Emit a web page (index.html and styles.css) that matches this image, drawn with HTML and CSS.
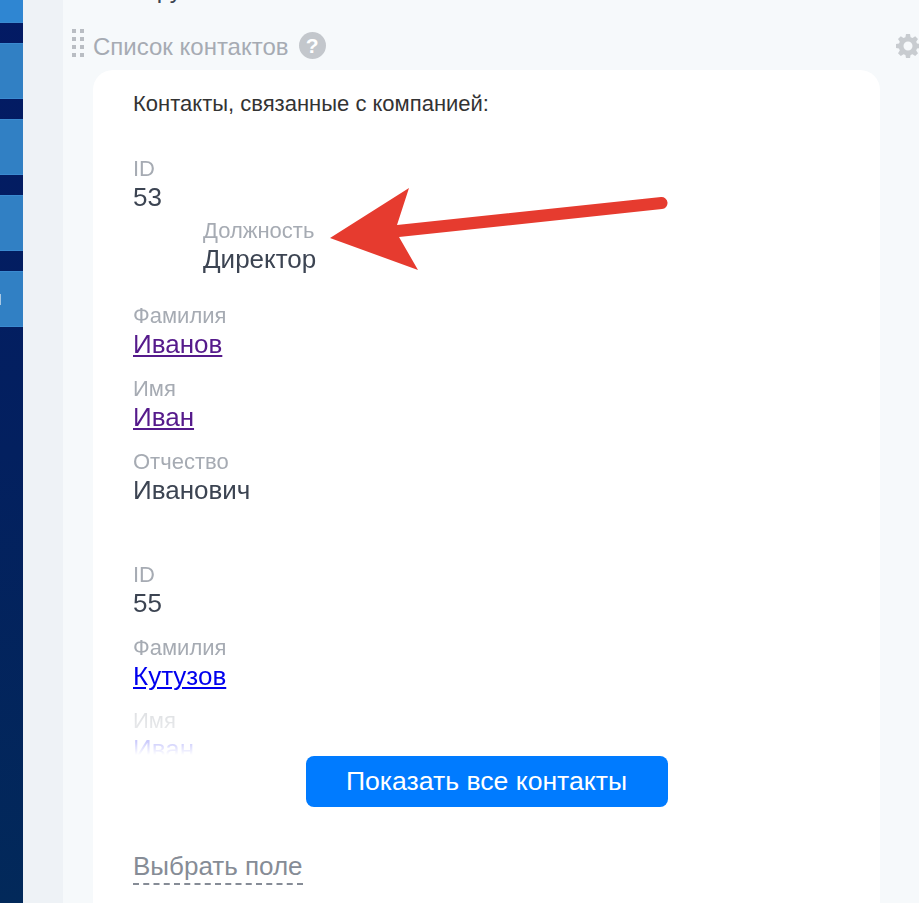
FILE: index.html
```html
<!DOCTYPE html>
<html lang="ru">
<head>
  <meta charset="UTF-8">
  <title>Список контактов</title>
  <link rel="stylesheet" href="styles.css">
</head>
<body>
  <nav class="sidebar">
    <div class="tile tile-first"></div>
    <div class="tile"></div>
    <div class="tile"></div>
    <div class="tile"></div>
    <div class="tile"><span class="tile-mark"></span></div>
  </nav>
  <div class="gutter"></div>

  <main class="content">
    <div class="clipped-title">Группа</div>

    <div class="widget-head">
      <div class="grip">
        <i></i><i></i><i></i><i></i><i></i><i></i><i></i><i></i>
      </div>
      <span class="widget-title">Список контактов</span>
      <span class="help">?</span>
      <svg class="gear" viewBox="0 0 24 24" width="24" height="24">
        <path fill="#c8ccd0" fill-rule="evenodd" d="M10 0h4l.6 3.2 1.900.8L19.200 2.200 22 5l-1.800 2.700.8 1.900L24 10v4l-3 .6-.8 1.900L22 19.200 19.200 22l-2.700-1.800-1.900.8L14 24h-4l-.6-3-1.900-.8L4.800 22 2 19.200l1.800-2.700-.8-1.900L0 14v-4l3-.4.8-1.900L2 5l2.800-2.800L7.500 4l1.900-.8zM12 7.500a4.500 4.500 0 1 0 0 9 4.500 4.500 0 0 0 0-9z"/>
      </svg>
    </div>

    <section class="card">
      <p class="intro">Контакты, связанные с компанией:</p>

      <div class="contacts">
        <div class="contact">
          <div class="field field-id">
            <div class="label">ID</div>
            <div class="value">53</div>
          </div>
          <div class="field field-nested">
            <div class="label">Должность</div>
            <div class="value">Директор</div>
          </div>
          <div class="field">
            <div class="label">Фамилия</div>
            <div class="value"><a href="#" class="visited">Иванов</a></div>
          </div>
          <div class="field">
            <div class="label">Имя</div>
            <div class="value"><a href="#" class="visited">Иван</a></div>
          </div>
          <div class="field">
            <div class="label">Отчество</div>
            <div class="value">Иванович</div>
          </div>
        </div>

        <div class="contact">
          <div class="field">
            <div class="label">ID</div>
            <div class="value">55</div>
          </div>
          <div class="field">
            <div class="label">Фамилия</div>
            <div class="value"><a href="#">Кутузов</a></div>
          </div>
          <div class="field">
            <div class="label">Имя</div>
            <div class="value"><a href="#">Иван</a></div>
          </div>
        </div>
      </div>

      <div class="more-row">
        <button class="more-btn">Показать все контакты</button>
      </div>

      <span class="pick-field">Выбрать поле</span>
    </section>
  </main>

  <svg class="arrow" viewBox="0 0 919 903" width="919" height="903">
    <path fill="#e63b2f" d="M330 238 409 188 397 225 661 197a6 6 0 0 1 1 12L399 237 418 270z"/>
  </svg>
</body>
</html>
```

FILE: styles.css
```css
* {
  box-sizing: border-box;
}

html, body {
  height: 100%;
}

body {
  margin: 0;
  display: flex;
  overflow: hidden;
  font-family: 'Liberation Sans', Arial, sans-serif;
  background: #f6f9fb;
}

.sidebar {
  width: 23px;
  flex-shrink: 0;
  padding-top: 43px;
  display: flex;
  flex-direction: column;
  gap: 20px;
  background: linear-gradient(180deg, #031a64 0%, #03205f 50%, #02295a 100%);
}

.tile {
  height: 56px;
  background: #3180c4;
  border-top: 1px solid #3a8ad0;
  border-bottom: 1px solid #3a8ad0;
  position: relative;
}

.tile-first {
  height: 23px;
  margin-top: -43px;
  background: #2f86d2;
  border-top: 0;
}

.tile-mark {
  position: absolute;
  left: 0;
  top: 22px;
  width: 1px;
  height: 11px;
  background: #a9c8e4;
}

.gutter {
  width: 40px;
  flex-shrink: 0;
  background: #eef2f6;
}

.content {
  flex: 1;
  min-width: 0;
  overflow: hidden;
}

.clipped-title {
  height: 26px;
  margin-top: -23px;
  padding-left: 82px;
  font-size: 24px;
  line-height: 26px;
  color: #3c4452;
}

.widget-head {
  display: flex;
  align-items: center;
  height: 33px;
  margin-top: 26px;
  padding-left: 9px;
}

.grip {
  display: grid;
  grid-template-columns: 4px 4px;
  grid-auto-rows: 4px;
  gap: 4px;
  align-self: flex-start;
  width: 12px;
  margin-right: 9px;
}

.grip i {
  background: #b9bdc3;
}

.widget-title {
  padding-top: 2px;
  font-size: 24px;
  color: #a6abb3;
}

.help {
  width: 27px;
  height: 27px;
  margin-left: 10px;
  border-radius: 50%;
  background: #c3c7cc;
  color: #fff;
  font-size: 21px;
  font-weight: 700;
  line-height: 27px;
  text-align: center;
}

.gear {
  margin-left: auto;
  margin-right: -1px;
}

.card {
  width: 787px;
  margin: 8px 0 0 30px;
  padding: 21px 40px 40px;
  background: #fff;
  border-radius: 20px 20px 0 0;
  min-height: 860px;
}

.intro {
  margin: 0 0 37px;
  font-size: 22px;
  line-height: 26px;
  color: #333;
}

.contacts {
  height: 601px;
  overflow: hidden;
  -webkit-mask-image: linear-gradient(180deg, #000 535px, rgba(0, 0, 0, 0.35) 560px, rgba(0, 0, 0, 0.2) 588px, transparent 601px);
  mask-image: linear-gradient(180deg, #000 535px, rgba(0, 0, 0, 0.35) 560px, rgba(0, 0, 0, 0.2) 588px, transparent 601px);
}

.contact {
  margin-bottom: 55px;
}

.field {
  margin-bottom: 15px;
}

.field-id {
  margin-bottom: 4px;
}

.field-nested {
  margin-left: 70px;
  margin-bottom: 27px;
}

.label {
  font-size: 22px;
  line-height: 29px;
  color: #a6abb3;
}

.value {
  font-size: 26px;
  line-height: 29px;
  color: #3c4452;
}

.value a {
  color: #0000ee;
}

.value a.visited {
  color: #551a8b;
}

.more-row {
  display: flex;
  justify-content: center;
  margin-top: 1px;
}

.more-btn {
  width: 362px;
  height: 51px;
  border: 0;
  border-radius: 8px;
  background: #007bff;
  color: #fff;
  font-family: inherit;
  font-size: 26.6px;
  cursor: pointer;
}

.pick-field {
  display: inline-block;
  margin-top: 43px;
  font-size: 26px;
  line-height: 33px;
  color: #868c96;
  border-bottom: 2px dashed #868c96;
}

.arrow {
  position: absolute;
  left: 0;
  top: 0;
  pointer-events: none;
}
```
